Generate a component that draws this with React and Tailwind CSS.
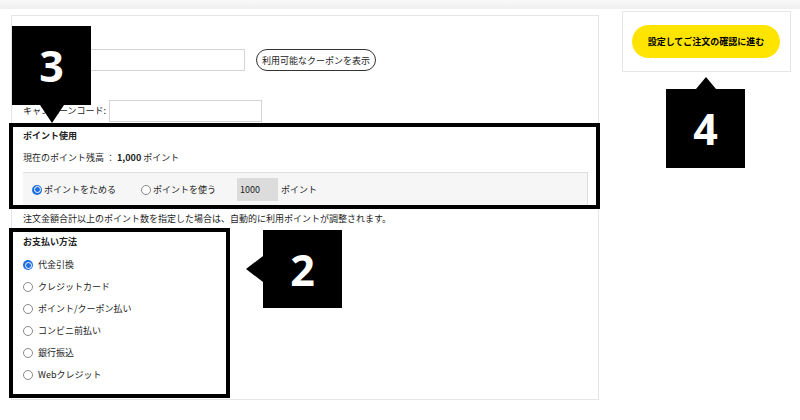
function Radio({ checked, className = '' }) {
  if (checked) {
    return (
      <span className={`w-[10px] h-[10px] shrink-0 rounded-full bg-[#1f6fe0] flex items-center justify-center ${className}`}>
        <span className="w-[7px] h-[7px] rounded-full border border-white bg-[#1f6fe0]" />
      </span>
    )
  }
  return <span className={`block w-[10px] h-[10px] shrink-0 rounded-full border border-[#8a8a8a] bg-white ${className}`} />
}

const payments = [
  { label: '代金引換', checked: true },
  { label: 'クレジットカード' },
  { label: 'ポイント/クーポン払い' },
  { label: 'コンビニ前払い' },
  { label: '銀行振込' },
  { label: 'Webクレジット' },
]

export default function App() {
  return (
    <div
      className="relative w-[800px] h-[420px] overflow-hidden bg-white text-[9px] text-[#222]"
      style={{ fontFamily: '"Noto Sans CJK JP", "Noto Sans", sans-serif' }}
    >
      {/* top strip */}
      <div className="h-[9px] bg-linear-to-b from-[#f9f9f9] to-[#efefef]" />

      <div className="flex items-start pl-[11px] gap-[23px]">
        {/* main panel */}
        <div className="mt-[6px] w-[588px] h-[385px] border border-[#e6e6e6] px-[11px] pt-[33px]">
          <div className="flex items-center h-[22px]">
            <input className="w-[222px] h-[22px] border border-[#d4d4d4] outline-none" />
            <button className="ml-[11px] w-[120px] h-[22px] rounded-full border border-[#333] bg-white text-[9px] text-[#222] leading-none">
              利用可能なクーポンを表示
            </button>
          </div>

          <div className="mt-[29px] flex items-center h-[22px]">
            <span className="mr-[3px] whitespace-nowrap">キャンペーンコード:</span>
            <input className="w-[153px] h-[22px] border border-[#d4d4d4] outline-none" />
          </div>

          <div className="mt-[7px] h-[13px] leading-[13px] font-bold">ポイント使用</div>
          <div className="mt-[9px] h-[13px] leading-[13px]">
            現在のポイント残高 ： <span className="font-bold">1,000</span> ポイント
          </div>

          <div className="mt-[8px] w-[565px] h-[34px] border-t border-r border-[#dedede] bg-[#f6f6f6] flex items-center pl-[9px]">
            <Radio checked />
            <span className="ml-[2px]">ポイントをためる</span>
            <Radio className="ml-[25px]" />
            <span className="ml-[2px]">ポイントを使う</span>
            <div className="ml-[21px] w-[41px] h-[23px] bg-[#dcdcdc] flex items-center pl-[3px]">1000</div>
            <span className="ml-[3px]">ポイント</span>
          </div>

          <div className="mt-[6px] h-[13px] leading-[13px]">
            注文金額合計以上のポイント数を指定した場合は、自動的に利用ポイントが調整されます。
          </div>

          <div className="mt-[10px] h-[13px] leading-[13px] font-bold">お支払い方法</div>
          <div className="mt-[6px] flex flex-col">
            {payments.map((p) => (
              <div key={p.label} className="h-[22px] flex items-center">
                <Radio checked={p.checked} />
                <span className="ml-[5px]">{p.label}</span>
              </div>
            ))}
          </div>
        </div>

        {/* side panel */}
        <div className="mt-[2px] w-[169px] h-[61px] border border-[#e6e6e6] pt-[13px] pl-[9px]">
          <button className="w-[148px] h-[33px] rounded-full bg-[#ffe400] text-[9px] font-bold text-black">
            設定してご注文の確認に進む
          </button>
        </div>
      </div>

      {/* annotation outlines */}
      <div className="absolute left-[9px] top-[123px] w-[591px] h-[86px] border-4 border-black" />
      <div className="absolute left-[9px] top-[228px] w-[221px] h-[170px] border-4 border-black" />

      {/* badge 3 */}
      <div
        className="absolute left-[12px] top-[26px] w-[79px] h-[79px] bg-black flex items-center justify-center text-white font-bold text-[43px] leading-none"
        style={{ fontFamily: '"Noto Sans", sans-serif' }}
      >
        3
      </div>
      <div className="absolute left-[40px] top-[105px] w-0 h-0 border-l-[12px] border-r-[12px] border-t-[18px] border-l-transparent border-r-transparent border-t-black" />

      {/* badge 4 */}
      <div className="absolute left-[696px] top-[77px] w-0 h-0 border-l-[10px] border-r-[10px] border-b-[12px] border-l-transparent border-r-transparent border-b-black" />
      <div
        className="absolute left-[666px] top-[89px] w-[79px] h-[79px] bg-black flex items-center justify-center text-white font-bold text-[43px] leading-none"
        style={{ fontFamily: '"Noto Sans", sans-serif' }}
      >
        4
      </div>

      {/* badge 2 */}
      <div className="absolute left-[246px] top-[256px] w-0 h-0 border-t-[13px] border-b-[13px] border-r-[17px] border-t-transparent border-b-transparent border-r-black" />
      <div
        className="absolute left-[263px] top-[230px] w-[79px] h-[78px] bg-black flex items-center justify-center text-white font-bold text-[43px] leading-none"
        style={{ fontFamily: '"Noto Sans", sans-serif' }}
      >
        2
      </div>
    </div>
  )
}
